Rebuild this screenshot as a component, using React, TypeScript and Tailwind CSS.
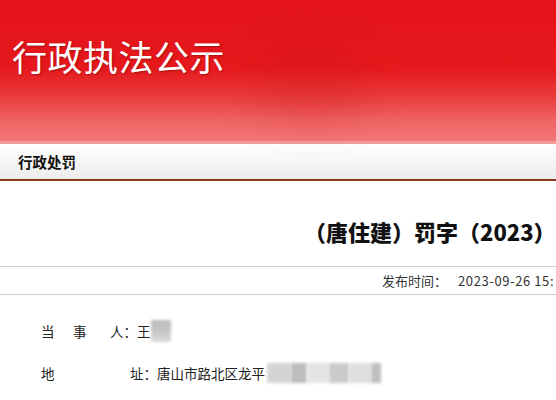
const cjk = { fontFamily: '"Noto Sans CJK SC", "Noto Sans", sans-serif' };

const Blur = ({ className }: { className: string }) => (
    <span className={`inline-block align-middle blur-[1.5px] ${className}`} />
);

export default function App() {
    return (
        <div className="w-[556px] h-[400px] overflow-hidden bg-white" style={cjk}>
            {/* banner */}
            <div className="relative h-[141px] bg-[linear-gradient(to_bottom,#e5141a_0%,#e6181c_48%,#ea3a3c_68%,#ef6263_85%,#f27878_100%)]">
                <div className="absolute left-[250px] top-[40px] w-[120px] h-[80px] rounded-full bg-[#c81a1a] opacity-20 blur-[20px]" />
                <div className="relative pl-[12px] pt-[28px] text-[35px] leading-[56px] tracking-[0.5px] text-white [text-shadow:1px_1px_2px_rgba(90,0,0,0.45)]">
                    行政执法公示
                </div>
            </div>
            <div className="h-[3px] bg-[#f39a9a]" />

            {/* section bar */}
            <div className="flex items-center h-[37px] pl-[18px] bg-[linear-gradient(to_bottom,#ffffff,#ececec)] border-b-2 border-[#8c3a1c]">
                <span className="text-[14.5px] font-bold text-[#111]">行政处罚</span>
            </div>

            {/* heading */}
            <div className="pt-[35px] pl-[304px] whitespace-nowrap text-[22px] leading-[30px] font-black text-[#111]">
                （唐住建）罚字（2023）
            </div>

            {/* publish time */}
            <div className="mt-[20px] h-[29px] flex items-center pl-[382px] whitespace-nowrap border-y border-[#cfcfcf] text-[13px] text-[#333]">
                <span>发布时间：</span>
                <span className="ml-[11px] tracking-[0.6px]">2023-09-26 15:</span>
            </div>

            {/* details */}
            <div className="pl-[41px] pt-[25px] text-[13.5px] text-[#222]">
                <div className="flex items-center h-[22px]">
                    <span className="w-[32px]">当</span>
                    <span className="w-[37px]">事</span>
                    <span>人：王</span>
                    <Blur className="w-[20px] h-[22px] bg-[linear-gradient(to_bottom,#bdbdbd_0%,#c4c4c4_50%,#dcdcdc_100%)]" />
                </div>
                <div className="flex items-center h-[22px] mt-[20px]">
                    <span className="w-[89px]">地</span>
                    <span>址：唐山市路北区龙平</span>
                    <span className="inline-flex h-[20px] ml-[2px]">
                        <Blur className="w-[24px] h-[20px] bg-[#d4d4d4]" />
                        <Blur className="w-[16px] h-[20px] bg-[#bdbdbd]" />
                        <Blur className="w-[22px] h-[20px] bg-[#e4e4e4]" />
                        <Blur className="w-[20px] h-[20px] bg-[#cacaca]" />
                        <Blur className="w-[22px] h-[20px] bg-[#dedede]" />
                        <Blur className="w-[10px] h-[20px] bg-[#c0c0c0]" />
                    </span>
                </div>
            </div>
        </div>
    );
}
